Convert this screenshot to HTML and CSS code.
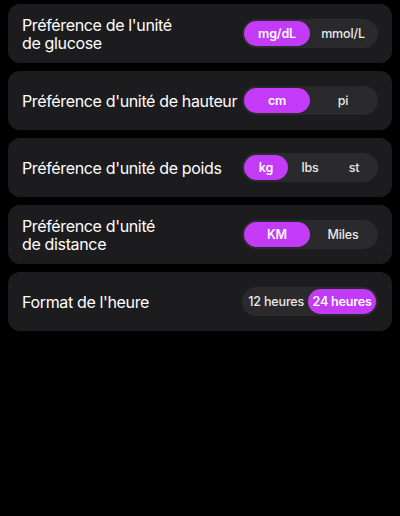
FILE: index.html
```html
<!DOCTYPE html>
<html lang="fr">
  <head>
    <meta charset="UTF-8" />
    <meta name="viewport" content="width=device-width, initial-scale=1.0" />
    <title>Préférences d'unités</title>
    <link rel="stylesheet" href="styles.css">
  </head>
  <body>
    <main class="settings">
      <div class="card">
        <p class="label">Préférence de l'unité<br />de glucose</p>
        <div class="segment">
          <button class="seg active">mg/dL</button>
          <button class="seg">mmol/L</button>
        </div>
      </div>

      <div class="card">
        <p class="label">Préférence d'unité de hauteur</p>
        <div class="segment">
          <button class="seg active">cm</button>
          <button class="seg">pi</button>
        </div>
      </div>

      <div class="card">
        <p class="label">Préférence d'unité de poids</p>
        <div class="segment">
          <button class="seg active">kg</button>
          <button class="seg">lbs</button>
          <button class="seg">st</button>
        </div>
      </div>

      <div class="card">
        <p class="label">Préférence d'unité<br />de distance</p>
        <div class="segment">
          <button class="seg active">KM</button>
          <button class="seg">Miles</button>
        </div>
      </div>

      <div class="card">
        <p class="label">Format de l'heure</p>
        <div class="segment segment-fit">
          <button class="seg">12 heures</button>
          <button class="seg active">24 heures</button>
        </div>
      </div>
    </main>
  </body>
</html>
```

FILE: styles.css
```css
/* Global */
body {
  margin: 0;
  background: #000;
  color: #fff;
  font-family: Inter, "Liberation Sans", sans-serif;
}

.settings {
  display: flex;
  flex-direction: column;
  gap: 8px;
  padding: 4px 8px;
}

/* Cards */
.card {
  display: flex;
  align-items: center;
  justify-content: space-between;
  height: 59px;
  padding: 0 14px;
  background: #1c1c1e;
  border-radius: 12px;
}

.label {
  margin: 0;
  font-size: 16px;
  line-height: 18px;
  letter-spacing: -0.35px;
  white-space: nowrap;
}

/* Segmented control */
.segment {
  display: flex;
  flex-shrink: 0;
  width: 136px;
  height: 29px;
  padding: 2px;
  box-sizing: border-box;
  background: #2a2a2c;
  border-radius: 15px;
}

.seg {
  flex: 1;
  border: none;
  outline: none;
  background: transparent;
  border-radius: 13px;
  color: #e8e8e8;
  font-family: Inter, "Liberation Sans", sans-serif;
  font-size: 12.5px;
  font-weight: 500;
  letter-spacing: -0.15px;
  white-space: nowrap;
  padding: 0;
  cursor: pointer;
}

.seg.active {
  background: #c33af7;
  color: #fff;
  font-weight: 600;
}

.segment-fit .seg {
  flex: 1 1 auto;
  padding: 0 3px;
}
```
